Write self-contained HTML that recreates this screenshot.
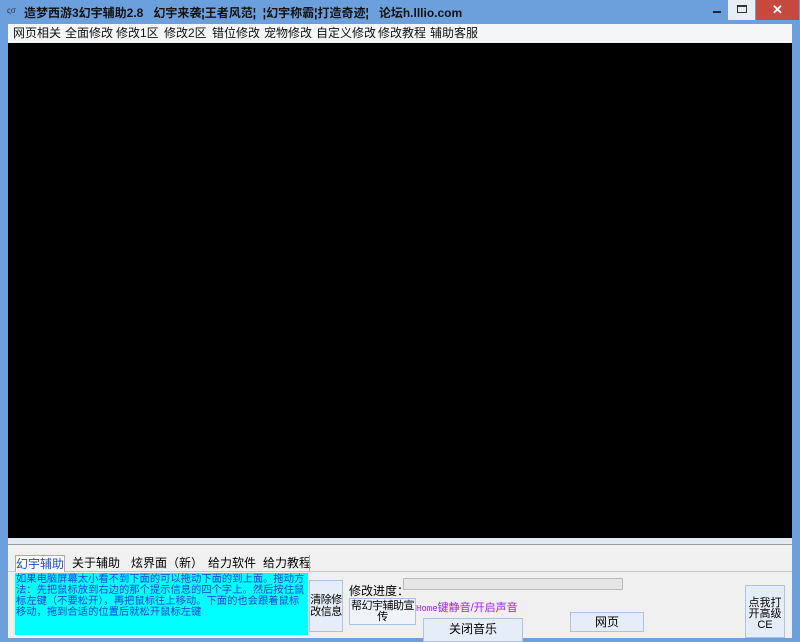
<!DOCTYPE html>
<html><head><meta charset="utf-8"><style>
*{margin:0;padding:0;box-sizing:border-box}
body{width:800px;height:642px;overflow:hidden;background:#6ca0dc;font-family:"Liberation Sans","Noto Sans CJK SC",sans-serif;font-size:12px;position:relative}
.a{position:absolute}
.btn{position:absolute;background:#e5eef8;border:1px solid #a9c3e0;text-align:center;color:#000;font-size:12px;white-space:nowrap}
</style></head><body>
<div class="a" style="left:7px;top:6px;font-size:8px;color:#334">ςσ</div>
<div class="a" style="left:24px;top:4px;font-size:12px;font-weight:bold;color:#111;white-space:nowrap">造梦西游3幻宇辅助2.8 &nbsp;&nbsp;幻宇来袭¦王者风范¦ &nbsp;¦幻宇称霸¦打造奇迹¦ &nbsp;&nbsp;论坛h.lllio.com</div>
<div class="a" style="left:713px;top:11px;width:8px;height:2px;background:#223"></div>
<div class="a" style="left:728px;top:0;width:27px;height:20px;background:#e8eef4"><div class="a" style="left:9px;top:5px;width:10px;height:8px;border:1px solid #333;border-top-width:2px"></div></div>
<div class="a" style="left:756px;top:0;width:43px;height:20px;background:#c7483f;color:#fff;text-align:center;font-size:13px;line-height:19px;font-weight:bold">✕</div>
<div class="a" style="left:8px;top:24px;width:784px;height:19px;background:#f5f6f7;white-space:nowrap;font-size:12px;line-height:19px;color:#111">
<span class="a" style="left:5px">网页相关</span><span class="a" style="left:57px">全面修改</span><span class="a" style="left:108px">修改1区</span><span class="a" style="left:156px">修改2区</span><span class="a" style="left:204px">错位修改</span><span class="a" style="left:256px">宠物修改</span><span class="a" style="left:308px">自定义修改</span><span class="a" style="left:370px">修改教程</span><span class="a" style="left:422px">辅助客服</span></div>
<div class="a" style="left:8px;top:43px;width:784px;height:495px;background:#000"></div>
<div class="a" style="left:8px;top:538px;width:784px;height:100px;background:#f0f0f0"></div>
<div class="a" style="left:8px;top:538px;width:784px;height:7px;background:#e4e9f0;border-bottom:1px solid #999"></div>
<div class="a" style="left:8px;top:571px;width:784px;height:1px;background:#c8c8c8"></div>
<div class="a" style="left:15px;top:555px;width:50px;height:17px;background:#fff;border:1px solid #aaa;border-bottom:none;color:#1a4bd0;line-height:16px;text-align:center">幻宇辅助</div>
<div class="a" style="left:72px;top:556px;line-height:15px">关于辅助</div>
<div class="a" style="left:131px;top:556px;line-height:15px">炫界面（新）</div>
<div class="a" style="left:208px;top:556px;line-height:15px">给力软件</div>
<div class="a" style="left:263px;top:556px;line-height:15px">给力教程</div>
<div class="a" style="left:309px;top:555px;width:1px;height:16px;background:#aaa"></div>
<div class="a" style="left:15px;top:573px;width:293px;height:62px;background:#00ffff;color:#1a3ae0;font-size:10.3px;line-height:11px;padding:1px 1px">如果电脑屏幕太小看不到下面的可以拖动下面的到上面。拖动方法：先把鼠标放到右边的那个提示信息的四个字上。然后按住鼠标左键（不要松开），再把鼠标往上移动。下面的也会跟着鼠标移动，拖到合适的位置后就松开鼠标左键</div>
<div class="btn" style="left:309px;top:580px;width:34px;height:52px;line-height:12px;padding-top:13px;font-size:11px;letter-spacing:-0.5px">清除修<br>改信息</div>
<div class="a" style="left:349px;top:582px">修改进度：</div>
<div class="a" style="left:403px;top:578px;width:220px;height:12px;background:#e6e6e6;border:1px solid #bcbcbc"></div>
<div class="btn" style="left:349px;top:598px;width:67px;height:27px;line-height:11px;padding-top:2px;background:#f0f4f9;font-size:11px;letter-spacing:-0.5px;overflow:hidden">帮幻宇辅助宣<br>传</div>
<div class="a" style="left:416px;top:599px;color:#a020f0;font-size:11px;white-space:nowrap"><span style="font-family:'Liberation Mono',monospace;font-size:9px">Home</span>键静音/开启声音</div>
<div class="btn" style="left:423px;top:618px;width:100px;height:24px;line-height:20px">关闭音乐</div>
<div class="btn" style="left:570px;top:612px;width:74px;height:20px;line-height:18px">网页</div>
<div class="btn" style="left:745px;top:585px;width:40px;height:53px;line-height:11px;padding-top:12px;font-size:11px">点我打<br>开高级<br>CE</div>
</body></html>
